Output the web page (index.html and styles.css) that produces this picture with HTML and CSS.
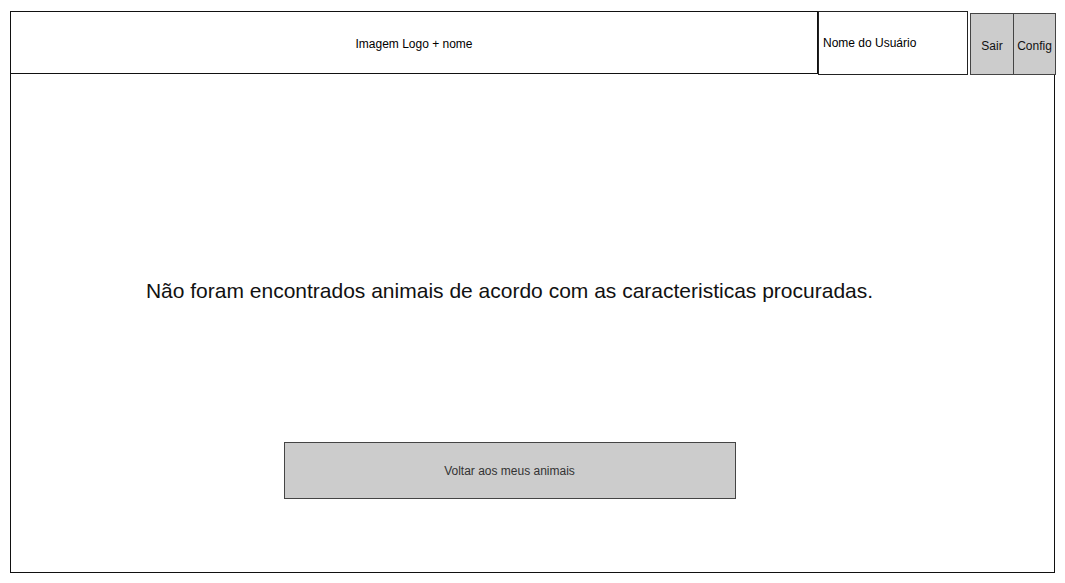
FILE: index.html
```html
<!DOCTYPE html>
<html lang="pt">
<head>
<meta charset="utf-8">
<title>Busca sem resultados</title>
<link rel="stylesheet" href="styles.css">
</head>
<body>
<div class="page">
  <header class="topbar">
    <div class="logo">Imagem Logo + nome</div>
    <div class="user">Nome do Usuário</div>
    <div class="actions">
      <button class="act act-sair">Sair</button>
      <button class="act act-config">Config</button>
    </div>
  </header>
  <main class="content">
    <p class="message">Não foram encontrados animais de acordo com as caracteristicas procuradas.</p>
    <button class="back">Voltar aos meus animais</button>
  </main>
</div>
</body>
</html>
```

FILE: styles.css
```css
* { box-sizing: border-box; }
html, body { margin: 0; padding: 0; background: #fff; }
body {
  font-family: "Liberation Sans", Arial, sans-serif;
  color: #000;
}
.page {
  padding: 11px 0 0 10px;
  width: 1056px;
}
.topbar {
  display: flex;
  align-items: flex-start;
  height: 64px;
}
.logo {
  width: 808px;
  height: 63px;
  border: 1px solid #111;
  display: flex;
  align-items: center;
  justify-content: center;
  font-size: 12px;
  padding-top: 2px;
}
.user {
  width: 150px;
  height: 64px;
  border: 1px solid #222;
  display: flex;
  align-items: center;
  padding: 0 0 0 4px;
  font-size: 12px;
}
.actions {
  display: flex;
  margin: 2px 0 0 2px;
}
.act {
  height: 62px;
  background: #cccccc;
  border: 1px solid #444;
  font-family: inherit;
  font-size: 12px;
  color: #111;
  padding: 4px 0 0 0;
  margin: 0;
}
.act-sair { width: 43px; border-right: none; }
.act-config { width: 43px; }
.content {
  margin-top: -1px;
  width: 1045px;
  height: 499px;
  border: 1px solid #111;
  border-top: none;
  display: flex;
  flex-direction: column;
  align-items: center;
  padding: 205px 46px 0 0;
}
.message {
  margin: 0;
  font-size: 21px;
  line-height: 24px;
  color: #111;
  white-space: nowrap;
}
.back {
  margin-top: 139px;
  width: 452px;
  height: 57px;
  background: #cccccc;
  border: 1px solid #444;
  font-family: inherit;
  font-size: 12px;
  color: #333;
  padding: 0;
}
```
